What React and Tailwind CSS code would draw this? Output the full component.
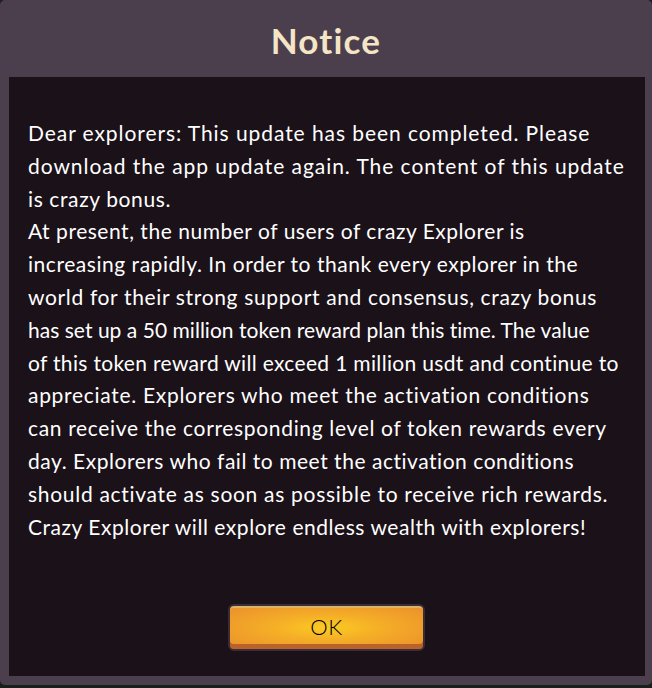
import React from "react";

const lines = [
  ["Dear explorers: This update has been completed. Please", "tracking-[0.93px]"],
  ["download the app update again. The content of this update", "tracking-[0.95px]"],
  ["is crazy bonus.", "tracking-[0.62px]"],
  ["At present, the number of users of crazy Explorer is", "tracking-[0.53px]"],
  ["increasing rapidly. In order to thank every explorer in the", "tracking-[0.54px]"],
  ["world for their strong support and consensus, crazy bonus", "tracking-[0.65px]"],
  ["has set up a 50 million token reward plan this time. The value", "tracking-[0.03px]"],
  ["of this token reward will exceed 1 million usdt and continue to", "tracking-[0.33px]"],
  ["appreciate. Explorers who meet the activation conditions", "tracking-[0.7px]"],
  ["can receive the corresponding level of token rewards every", "tracking-[0.66px]"],
  ["day. Explorers who fail to meet the activation conditions", "tracking-[0.53px]"],
  ["should activate as soon as possible to receive rich rewards.", "tracking-[0.7px]"],
  ["Crazy Explorer will explore endless wealth with explorers!", "tracking-[0.54px]"],
];

export default function App() {
  return (
    <div className="w-[652px] h-[688px] bg-[#18201c] overflow-hidden" style={{ fontFamily: "Lato, 'Noto Sans', sans-serif" }}>
      <div className="h-[685px] flex flex-col bg-[#4b3f4e] rounded-[5px]">
        <div className="h-[77px] flex items-center justify-center">
          <h1 className="text-[35px] font-bold tracking-[1.2px] text-[#f4e5c6] leading-none pt-[4px]">Notice</h1>
        </div>
        <div className="flex-1 ml-[9px] mr-[7px] mb-[9px] bg-[#1b1119] flex flex-col">
          <div className="pt-[40px] pl-[19px] text-[21px] leading-[32.8px] text-white">
            {lines.map(([l, t], i) => (
              <div key={i} className={"whitespace-nowrap " + t}>{l}</div>
            ))}
          </div>
          <div className="flex justify-center mt-[61px] pr-[1px]">
            <button className="w-[197px] h-[47px] rounded-[6px] border-2 border-[#3b2c37] bg-[radial-gradient(ellipse_at_center,#fbcb22_0%,#f5ae27_40%,#ea8f2c_100%)] shadow-[inset_0_-5px_0_#b9622a,inset_0_2px_0_#dcb466] text-[22px] font-light tracking-[0.5px] text-black flex items-center justify-center pb-[2px]">
              OK
            </button>
          </div>
        </div>
      </div>
    </div>
  );
}
